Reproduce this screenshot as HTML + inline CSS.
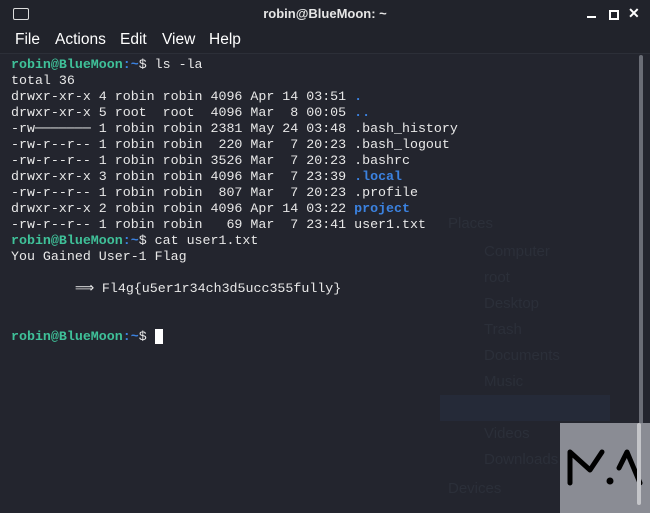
<!DOCTYPE html>
<html><head><style>
body{margin:0;width:650px;height:513px;background:#23252e;overflow:hidden;position:relative;font-family:"Liberation Sans",sans-serif}
.title{position:absolute;top:0;left:0;width:650px;height:27px;background:#21232b;color:#e6e6e6;font-size:13px;font-weight:bold;text-align:center;line-height:27px}
.menu{position:absolute;top:27px;left:0;width:650px;height:26px;background:#21232b;border-bottom:1px solid #2c2f38;color:#fff;font-size:15.5px}
.menu span{position:absolute;top:4px}
pre{position:absolute;left:11px;top:57px;margin:0;font-family:"Liberation Mono",monospace;font-size:13.3px;line-height:16px;color:#e8e8e8}
.g{color:#3fc199;font-weight:bold}.b{color:#3b82e0;font-weight:bold}
.ghost{position:absolute;color:#2b2f39;font-size:15px}
</style></head><body>
<div class="title">robin@BlueMoon: ~</div>
<div style="position:absolute;left:13px;top:8px;width:14px;height:10px;border:1.5px solid #ddd;border-radius:2px"></div>
<div style="position:absolute;left:587px;top:16px;width:9px;height:2px;background:#fff"></div>
<div style="position:absolute;left:609px;top:10px;width:6px;height:6px;border:2px solid #fff"></div>
<div style="position:absolute;left:628px;top:5px;color:#fff;font-size:14px;font-weight:bold">✕</div>
<div class="menu"><span style="left:15px">File</span><span style="left:55px">Actions</span><span style="left:120px">Edit</span><span style="left:162px">View</span><span style="left:209px">Help</span></div>
<div class="ghost" style="left:448px;top:215px">Places</div>
<div class="ghost" style="left:484px;top:243px">Computer</div>
<div class="ghost" style="left:484px;top:269px">root</div>
<div class="ghost" style="left:484px;top:295px">Desktop</div>
<div class="ghost" style="left:484px;top:321px">Trash</div>
<div class="ghost" style="left:484px;top:347px">Documents</div>
<div class="ghost" style="left:484px;top:373px">Music</div>
<div style="position:absolute;left:440px;top:395px;width:170px;height:26px;background:#252a38"></div>
<div class="ghost" style="left:484px;top:425px">Videos</div>
<div class="ghost" style="left:484px;top:451px">Downloads</div>
<div class="ghost" style="left:448px;top:480px">Devices</div>
<pre><span class="g">robin@BlueMoon</span><span class="b">:~</span>$ ls -la
total 36
drwxr-xr-x 4 robin robin 4096 Apr 14 03:51 <span class="b">.</span>
drwxr-xr-x 5 root  root  4096 Mar  8 00:05 <span class="b">..</span>
-rw─────── 1 robin robin 2381 May 24 03:48 .bash_history
-rw-r--r-- 1 robin robin  220 Mar  7 20:23 .bash_logout
-rw-r--r-- 1 robin robin 3526 Mar  7 20:23 .bashrc
drwxr-xr-x 3 robin robin 4096 Mar  7 23:39 <span class="b">.local</span>
-rw-r--r-- 1 robin robin  807 Mar  7 20:23 .profile
drwxr-xr-x 2 robin robin 4096 Apr 14 03:22 <span class="b">project</span>
-rw-r--r-- 1 robin robin   69 Mar  7 23:41 user1.txt
<span class="g">robin@BlueMoon</span><span class="b">:~</span>$ cat user1.txt
You Gained User-1 Flag

        ⟹ Fl4g{u5er1r34ch3d5ucc355fully}


<span class="g">robin@BlueMoon</span><span class="b">:~</span>$ <span style="background:#fff"> </span></pre>
<div style="position:absolute;left:639px;top:55px;width:4px;height:450px;background:#6a6d76;border-radius:2px"></div>
<div style="position:absolute;left:560px;top:423px;width:90px;height:90px;background:#8a8c94"></div>
<svg style="position:absolute;left:560px;top:423px" width="90" height="90"><path d="M10 60 V29 L30 47 L42 29" stroke="#000" stroke-width="5" fill="none" stroke-linejoin="round" stroke-linecap="round"/><circle cx="50" cy="58" r="3.5"/><path d="M59 45 L67 29 L80 60" stroke="#000" stroke-width="5" fill="none" stroke-linecap="round" stroke-linejoin="round"/><rect x="77" y="0" width="4" height="82" fill="#c4c5c9" rx="2"/></svg>
</body></html>
